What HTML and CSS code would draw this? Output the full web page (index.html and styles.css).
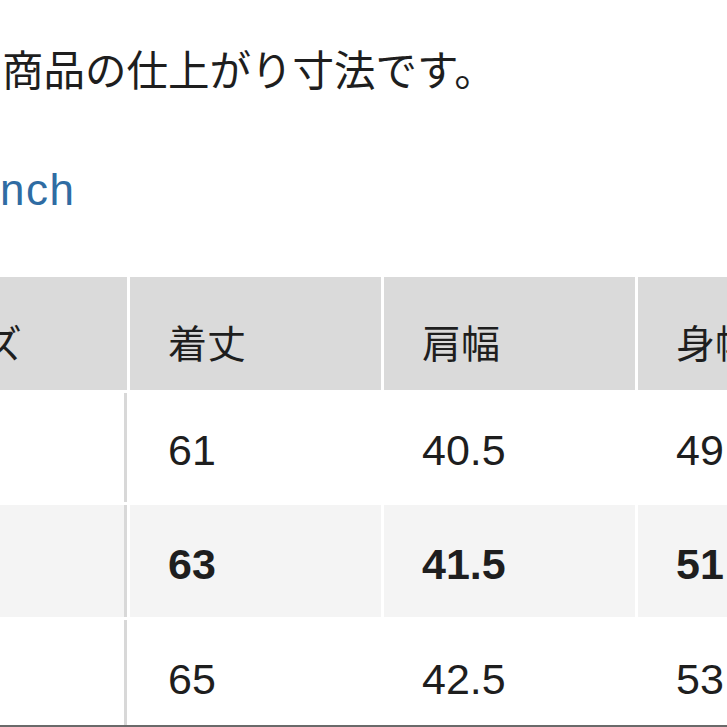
FILE: index.html
```html
<!DOCTYPE html>
<html lang="ja">
<head>
<meta charset="utf-8">
<title>サイズ表</title>
<link rel="stylesheet" href="styles.css">
</head>
<body>
<div class="page">
  <p class="intro">商品の仕上がり寸法です。</p>
  <p class="unit">nch</p>
  <div class="size-table">
    <div class="cell head first">サイズ</div>
    <div class="cell head">着丈</div>
    <div class="cell head">肩幅</div>
    <div class="cell head">身幅</div>

    <div class="cell first">S</div>
    <div class="cell num">61</div>
    <div class="cell num">40.5</div>
    <div class="cell num">49</div>

    <div class="cell first alt bold">M</div>
    <div class="cell num alt bold">63</div>
    <div class="cell num alt bold">41.5</div>
    <div class="cell num alt bold">51</div>

    <div class="cell first">L</div>
    <div class="cell num">65</div>
    <div class="cell num">42.5</div>
    <div class="cell num">53</div>
  </div>
</div>
</body>
</html>
```

FILE: styles.css
```css
html, body {
  margin: 0;
  padding: 0;
  background: #ffffff;
}

body {
  width: 727px;
  height: 727px;
  overflow: hidden;
  font-family: "Liberation Sans", "Noto Sans CJK JP", sans-serif;
  color: #1e1e1e;
}

body::after {
  content: "";
  position: fixed;
  left: 0;
  right: 0;
  bottom: 0;
  height: 2px;
  background: #6a6a6a;
}

.page {
  display: flex;
  flex-direction: column;
}

.intro {
  margin: 0;
  padding: 44px 0 0 2px;
  font-family: "Noto Sans CJK JP", sans-serif;
  font-size: 41.5px;
  line-height: 48px;
  color: #1e1e1e;
}

.unit {
  margin: 0;
  padding-top: 74px;
  font-size: 44px;
  line-height: 48px;
  letter-spacing: 1.5px;
  color: #2f6ca3;
}

.size-table {
  margin-top: 63px;
  margin-left: -124px;
  display: grid;
  grid-template-columns: repeat(4, 251px);
  grid-template-rows: 113px 109px 112px 112px;
  column-gap: 3px;
  row-gap: 3px;
}

.cell {
  display: flex;
  align-items: center;
  padding-left: 38px;
  font-size: 43px;
  background: #ffffff;
}

.cell.head {
  background: #dadada;
  font-family: "Noto Sans CJK JP", sans-serif;
  font-size: 39px;
  padding-top: 14px;
}

.cell.head.first {
  padding-left: 30px;
}

.cell.first:not(.head) {
  box-shadow: inset -3px 0 0 #d8d8d8;
}

.cell.num {
  padding-top: 6px;
}

.cell.alt {
  background: #f4f4f4;
}

.cell.bold {
  font-weight: bold;
}
```
